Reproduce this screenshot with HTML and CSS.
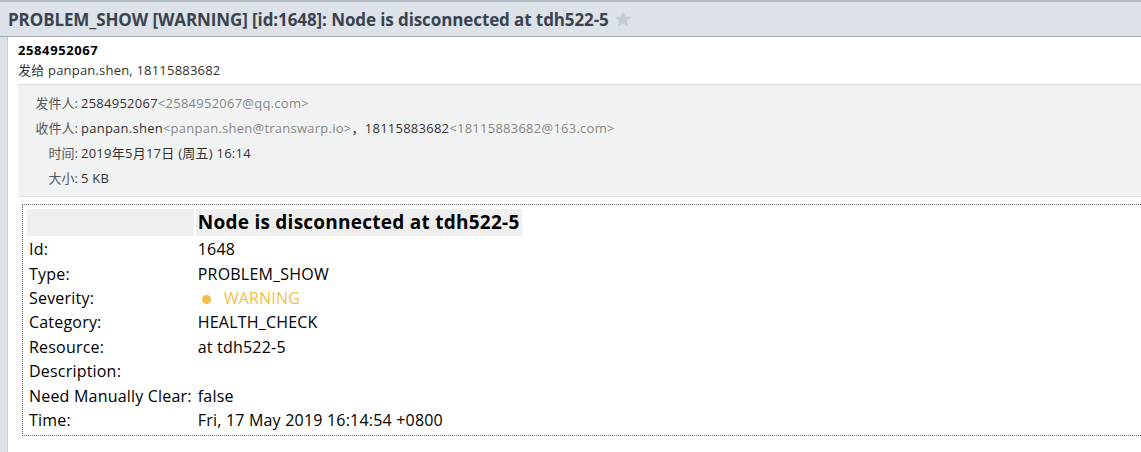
FILE: index.html
```html
<!DOCTYPE html>
<html>
<head>
<meta charset="utf-8">
<link rel="stylesheet" href="styles.css">
</head>
<body>
<div class="topbar">
  <span class="subject">PROBLEM_SHOW [WARNING] [id:1648]: Node is disconnected at tdh522-5</span>
  <svg class="star" width="18" height="18" viewBox="0 0 24 24"><path d="M12 1.5l3.1 7.2 7.8.7-5.9 5.2 1.8 7.6L12 18.2l-6.8 4 1.8-7.6L1.1 9.4l7.8-.7z" fill="#c5cad0"/></svg>
</div>
<div class="panel">
  <div class="sender">
    <div class="from-name">2584952067</div>
    <div class="to-line">发给 panpan.shen, 18115883682</div>
  </div>
  <div class="info">
    <div class="row"><span class="lbl">发件人:</span><span class="val">2584952067<span class="addr">&lt;2584952067@qq.com&gt;</span></span></div>
    <div class="row"><span class="lbl">收件人:</span><span class="val">panpan.shen<span class="addr">&lt;panpan.shen@transwarp.io&gt;</span>，18115883682<span class="addr">&lt;18115883682@163.com&gt;</span></span></div>
    <div class="row"><span class="lbl">时间:</span><span class="val">2019年5月17日 (周五) 16:14</span></div>
    <div class="row"><span class="lbl">大小:</span><span class="val">5 KB</span></div>
  </div>
  <div class="mailbody">
    <table class="alert">
      <tr class="head"><td class="blank"></td><td><span class="title">Node is disconnected at tdh522-5</span></td></tr>
      <tr><td>Id:</td><td>1648</td></tr>
      <tr><td>Type:</td><td>PROBLEM_SHOW</td></tr>
      <tr><td>Severity:</td><td class="sev"><span class="dot"></span><span class="warn">WARNING</span></td></tr>
      <tr><td>Category:</td><td>HEALTH_CHECK</td></tr>
      <tr><td>Resource:</td><td>at tdh522-5</td></tr>
      <tr><td>Description:</td><td></td></tr>
      <tr><td>Need Manually Clear:</td><td>false</td></tr>
      <tr><td>Time:</td><td>Fri, 17 May 2019 16:14:54 +0800</td></tr>
    </table>
  </div>
</div>
</body>
</html>
```

FILE: styles.css
```css
html, body {
  margin: 0;
  padding: 0;
  background: #dce2e8;
  overflow: hidden;
}
body {
  font-family: "Open Sans", "Noto Sans CJK SC", sans-serif;
  color: #000;
}
.topbar {
  height: 34px;
  border-top: 2px solid #b4bcc3;
  border-bottom: 1px solid #a2abb0;
  display: flex;
  align-items: center;
  padding-left: 8px;
  gap: 5px;
}
.subject {
  font-size: 17px;
  font-weight: 700;
  color: #3b4350;
  letter-spacing: -0.1px;
}
.star { margin-top: -1px; }
.panel {
  margin-left: 7px;
  background: #fff;
  border-left: 1px solid #c9cfd4;
  height: 420px;
  padding-left: 10px;
}
.sender {
  padding-top: 4px;
  height: 43px;
}
.from-name {
  font-size: 13px;
  font-weight: 700;
  color: #000;
  line-height: 18px;
  letter-spacing: 0.6px;
}
.to-line {
  font-size: 13px;
  color: #333;
  line-height: 22px;
  letter-spacing: 0.2px;
}
.info {
  background: #f0f3f2;
  border-top: 1px solid #dcdedd;
  border-bottom: 1px solid #dcdedd;
  padding: 5px 0 6px;
  font-size: 13px;
}
.row {
  display: flex;
  height: 25px;
  align-items: center;
}
.lbl {
  width: 60px;
  text-align: right;
  color: #555;
  padding-right: 3px;
}
.val { color: #333; letter-spacing: 0.25px; }
.addr { color: #888; }
.mailbody {
  padding: 7px 0 0 4px;
}
.alert {
  border: 1px dotted #666;
  border-right: none;
  width: 100%;
  border-spacing: 2px;
  padding: 2px;
  font-size: 16px;
  color: #000;
  letter-spacing: 0.2px;
}
.alert td {
  padding: 0 2px;
  height: 22.4px;
  line-height: 20px;
  white-space: nowrap;
}
.alert td:first-child { width: 160px; }
.head td { background: #efefef; height: 27px; }
.head td:last-child { background: transparent; padding: 0; }
.title {
  display: inline-block;
  background: #efefef;
  font-size: 19px;
  font-weight: 700;
  padding: 0 2px;
  line-height: 27px;
  letter-spacing: 0.25px;
}
.sev .dot {
  display: inline-block;
  width: 9px;
  height: 9px;
  border-radius: 50%;
  background: #f0bf4a;
  margin: 0 13px 0 4px;
}
.warn { color: #f0bf4a; }
```
